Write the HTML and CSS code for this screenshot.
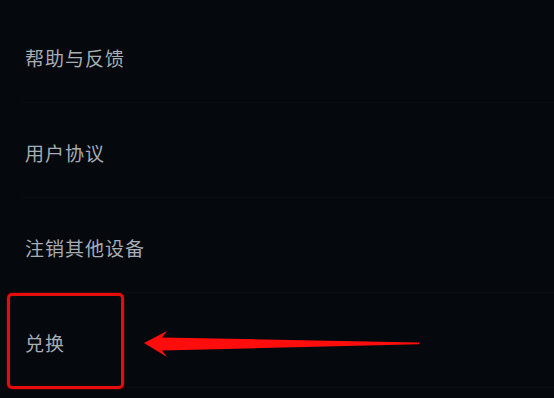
FILE: index.html
```html
<!DOCTYPE html>
<html lang="zh-CN">
<head>
  <meta charset="UTF-8">
  <meta name="viewport" content="width=device-width, initial-scale=1.0">
  <title>设置</title>
  <link rel="stylesheet" href="styles.css">
</head>
<body>
  <div class="screen">
    <ul class="menu">
      <li class="menu-item">帮助与反馈</li>
      <li class="menu-item">用户协议</li>
      <li class="menu-item">注销其他设备</li>
      <li class="menu-item">兑换</li>
    </ul>

    <!-- annotation: highlight box + arrow -->
    <div class="mark-box"></div>
    <svg class="mark-arrow" width="554" height="398" viewBox="0 0 554 398">
      <polygon points="144,343 167,331 162,337.5 419,342.5 419,344.2 162,350.5 167,357" fill="#ff0d0d"/>
    </svg>
  </div>
</body>
</html>
```

FILE: styles.css
```css
body {
  margin: 0;
  padding: 0;
  background-color: #05080c;
  font-family: "Noto Sans CJK SC", "Noto Sans", sans-serif;
}
.screen {
  position: relative;
  width: 554px;
  height: 398px;
  overflow: hidden;
  background-color: #05080c;
}
.menu {
  list-style: none;
  margin: 0;
  padding: 8px 0 0 0;
}
.menu-item {
  height: 20px;
  margin-left: 22px;
  padding: 40px 0 34px 3px;
  line-height: 20px;
  font-size: 19px;
  letter-spacing: 1px;
  color: #a6adb5;
  border-bottom: 1px solid #0a0e13;
}
.mark-box {
  position: absolute;
  left: 7px;
  top: 293px;
  width: 111px;
  height: 90px;
  border: 3px solid #e60c0c;
  border-radius: 5px;
  box-shadow: 0 0 2px rgba(255, 0, 0, 0.6);
}
.mark-arrow {
  position: absolute;
  left: 0;
  top: 0;
  filter: blur(0.5px);
}
```
